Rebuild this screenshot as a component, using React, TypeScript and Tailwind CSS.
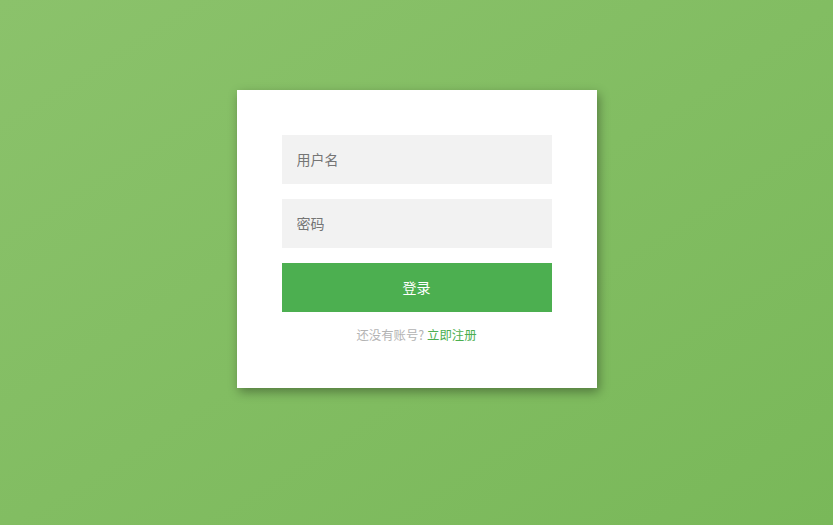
import React from 'react';

const App: React.FC = () => {
  const [username, setUsername] = React.useState('');
  const [password, setPassword] = React.useState('');

  return (
    <div
      className="min-h-screen w-full bg-gradient-to-br from-[#8bc26b] to-[#79b859] pt-[90px]"
      style={{ fontFamily: '"Noto Sans CJK SC", "Noto Sans", sans-serif' }}
    >
      <div className="mx-auto w-[360px] bg-white px-[45px] pt-[45px] pb-[44px] shadow-[2px_4px_10px_rgba(0,0,0,0.35)]">
        <form className="flex flex-col gap-[15px]" onSubmit={(e) => e.preventDefault()}>
          <input
            type="text"
            value={username}
            onChange={(e) => setUsername(e.target.value)}
            placeholder="用户名"
            className="h-[49px] w-full bg-[#f2f2f2] pl-[15px] pr-[14px] pb-[1px] text-[14px] text-[#333] outline-none placeholder:text-[#757575]"
          />
          <input
            type="password"
            value={password}
            onChange={(e) => setPassword(e.target.value)}
            placeholder="密码"
            className="h-[49px] w-full bg-[#f2f2f2] pl-[15px] pr-[14px] pb-[1px] text-[14px] text-[#333] outline-none placeholder:text-[#757575]"
          />
          <button
            type="submit"
            className="h-[49px] w-full bg-[#4caf50] text-[14px] text-white"
          >
            登录
          </button>
        </form>
        <p className="mt-[14px] text-center text-[12.4px] leading-[18px] text-[#b3b3b3]">
          还没有账号? <a href="#" className="text-[#4caf50]">立即注册</a>
        </p>
      </div>
    </div>
  );
};

export default App;
